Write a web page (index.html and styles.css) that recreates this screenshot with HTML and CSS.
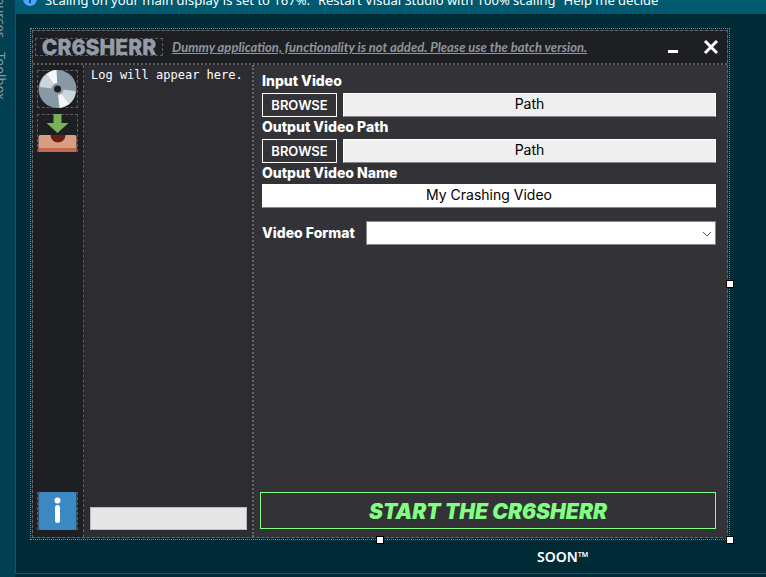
FILE: index.html
```html
<!DOCTYPE html>
<html lang="en">
<head>
<meta charset="utf-8">
<title>CR6SHERR designer</title>
<link rel="stylesheet" href="styles.css">
</head>
<body>
<nav class="rail">
  <span>Data Sources</span>
  <span>Toolbox</span>
</nav>
<main class="designer">
  <div class="notice">
    <svg class="notice-icon" viewBox="0 0 14 14"><circle cx="7" cy="7" r="7" fill="#4da3ff"/><path d="M6 6h2v5H6zM6 3h2v2H6z" fill="#005a70"/></svg>
    <span>Scaling on your main display is set to 167%.</span>
    <a href="#restart">Restart Visual Studio with 100% scaling</a>
    <a href="#help">Help me decide</a>
  </div>
  <section class="canvas">
    <div class="window">
      <div class="frame">
        <header class="titlebar">
          <h1 class="logo">CR6SHERR</h1>
          <p class="tagline">Dummy application, functionality is not added. Please use the batch version.</p>
          <button class="caption-button" type="button" aria-label="Minimize"><svg viewBox="0 0 16 16"><path d="M3 12.500h10" stroke="#fff" stroke-width="3"/></svg></button>
          <button class="caption-button" type="button" aria-label="Close"><svg viewBox="0 0 16 16"><path d="M2 2l12 12M14 2L2 14" stroke="#fff" stroke-width="3"/></svg></button>
        </header>
        <div class="content">
          <aside class="tools">
            <button class="tool" type="button" aria-label="Disc">
              <svg viewBox="0 0 38 38"><circle cx="19" cy="19" r="19" fill="#8899a6"/><path d="M19 19L1 17C2 11 4 7 8 4z" fill="#ccd6dd"/><path d="M19 19L8 4c3-2 6-4 10-4z" fill="#f5f8fa"/><path d="M19 19l18 2c0 6-3 10-6 13z" fill="#ccd6dd"/><path d="M19 19l12 15c-3 2-6 3-10 4z" fill="#f5f8fa"/><circle cx="19" cy="19" r="6" fill="#8899a6"/><circle cx="19" cy="19" r="3.500" fill="#1e1f23"/></svg>
            </button>
            <button class="tool" type="button" aria-label="Save to tray">
              <svg viewBox="0 0 38 38"><path d="M15 0h8v9h7L19 19 8 9h7z" fill="#77b255"/><rect y="21" width="38" height="17" rx="2" fill="#d99e82"/><path d="M0 34h38v2q0 2-2 2H2q-2 0-2-2z" fill="#c1694f"/><path d="M12 21h15a7.500 7.500 0 0 1-15 0z" fill="#662113"/></svg>
            </button>
            <button class="tool tool-info" type="button" aria-label="About">
              <svg viewBox="0 0 38 38"><rect width="38" height="38" rx="3" fill="#3b88c3"/><circle cx="19" cy="8.500" r="3" fill="#fff"/><rect x="16.500" y="13" width="5" height="18" rx="2.500" fill="#fff"/></svg>
            </button>
          </aside>
          <section class="log">
            <output class="log-text">Log will appear here.</output>
            <div class="progress" role="progressbar" aria-label="Progress"></div>
          </section>
          <form class="settings">
            <label for="input-path">Input Video</label>
            <div class="row">
              <button class="browse" type="button">BROWSE</button>
              <input class="field readonly" id="input-path" value="Path" readonly>
            </div>
            <label for="output-path">Output Video Path</label>
            <div class="row">
              <button class="browse" type="button">BROWSE</button>
              <input class="field readonly" id="output-path" value="Path" readonly>
            </div>
            <label for="output-name">Output Video Name</label>
            <input class="field" id="output-name" value="My Crashing Video">
            <div class="row format">
              <label for="format">Video Format</label>
              <div class="select">
                <select id="format"><option></option></select>
                <svg class="chevron" viewBox="0 0 10 6"><path d="M1 1l4 4 4-4" fill="none" stroke="#555"/></svg>
              </div>
            </div>
            <button class="start" type="submit">START THE CR6SHERR</button>
          </form>
        </div>
      </div>
      <i class="handle east"></i>
      <i class="handle south"></i>
      <i class="handle corner"></i>
    </div>
    <p class="soon">SOON™</p>
  </section>
</main>
</body>
</html>
```
FILE: styles.css
```css
* { box-sizing: border-box; }

body {
  margin: 0;
  height: 100vh;
  display: flex;
  overflow: hidden;
  background: #002b36;
  color: #fff;
  font-family: "Noto Sans", sans-serif;
}

h1, p { margin: 0; }

button, input, select {
  margin: 0;
  font: inherit;
  color: inherit;
}

svg { display: block; }

.rail {
  flex: 0 0 15px;
  display: flex;
  flex-direction: column;
  align-items: flex-start;
  background: #004052;
  color: #839aa0;
  font-size: 13px;
  line-height: 16px;
}

.rail span {
  margin: -42px 0 56px -7px;
  writing-mode: vertical-rl;
  white-space: nowrap;
}

.designer {
  flex: 1;
  min-width: 0;
  display: flex;
  flex-direction: column;
  padding-bottom: 3px;
}

.notice {
  flex: none;
  height: 14px;
  display: flex;
  align-items: flex-end;
  gap: 8px;
  padding-left: 8px;
  background: #005b70;
  font-size: 13px;
  line-height: 18px;
  white-space: nowrap;
}

.notice a {
  color: inherit;
  text-decoration: none;
}

.notice span, .notice a { margin-bottom: 5px; }

.notice-icon {
  flex: none;
  width: 14px;
  height: 14px;
  margin-bottom: 8px;
}

.canvas {
  flex: 1;
  min-height: 0;
  display: flex;
  flex-direction: column;
  padding: 14px 36px 0 14px;
  border-left: 1px solid #3f4446;
  border-bottom: 1px solid #3f4446;
}

.window {
  flex: 1;
  min-height: 0;
  position: relative;
  display: flex;
  padding: 1px;
  border: 1px dotted #6d8a8c;
}

.frame {
  flex: 1;
  min-width: 0;
  display: flex;
  flex-direction: column;
  border: 1px dashed #66666c;
  background: #323237;
}

.titlebar {
  flex: 0 0 34px;
  display: flex;
  align-items: center;
  padding: 0 8px 0 2px;
  background: #1e1f23;
  border-bottom: 2px dotted #5c5c62;
}

.logo {
  flex: none;
  width: 128px;
  height: 18px;
  border: 1px dashed #5c5c62;
  color: #949ba6;
  font: 900 21px/18px Inter, sans-serif;
  text-align: center;
}

.tagline {
  flex: 1;
  padding-left: 9px;
  color: #8f959e;
  font: italic 700 13px/16px Lato, sans-serif;
  text-decoration: underline;
  white-space: nowrap;
}

.caption-button {
  width: 16px;
  height: 16px;
  padding: 0;
  border: 0;
  background: none;
}

.caption-button + .caption-button { margin-left: 22px; }

.content {
  flex: 1;
  min-height: 0;
  display: flex;
}

.tools {
  flex: 0 0 51px;
  display: flex;
  flex-direction: column;
  gap: 6px;
  padding: 5px 5px 7px 4px;
  background: #1e1f23;
  border-right: 1px dashed #5c5c62;
}

.tool {
  flex: none;
  width: 41px;
  height: 38px;
  padding: 0;
  border: 1px dashed #5c5c62;
  background: none;
}

.tool svg {
  width: 39px;
  height: 38px;
  margin-top: -1px;
}

.tool-info { margin-top: auto; }

.log {
  flex: 0 0 170px;
  display: flex;
  flex-direction: column;
  justify-content: space-between;
  padding: 2px 5px 7px 6px;
  background: #2d2d31;
  border-right: 2px dotted #66666e;
}

.log-text {
  padding-left: 1px;
  font: 12px/16px "DejaVu Sans Mono", monospace;
}

.progress {
  height: 23px;
  border: 1px solid #bcbcbc;
  background: #e6e6e6;
}

.settings {
  flex: 1;
  min-width: 0;
  display: flex;
  flex-direction: column;
  padding: 6px 11px 8px 6px;
  font: 14px/20px Inter, sans-serif;
}

.settings label {
  flex: none;
  padding-left: 2px;
  font-weight: 800;
}

.row {
  display: flex;
  gap: 6px;
  margin-top: 2px;
  padding-left: 2px;
}

.row .field { flex: 1; }

.browse {
  width: 75px;
  height: 24px;
  padding: 0;
  border: 1px solid #fff;
  background: none;
  font-size: 13px;
  font-weight: 600;
}

.field {
  min-width: 0;
  height: 24px;
  padding: 0 0 3px;
  border: 1px solid #fff;
  border-bottom-color: #858585;
  border-radius: 1px;
  background: #fff;
  color: #000;
  text-align: center;
}

.readonly { background: #efefef; }

.settings > .field { margin: 1px 0 0 2px; }

.format {
  align-items: center;
  gap: 11px;
  margin-top: 13px;
  padding-left: 0;
}

.select {
  flex: 1;
  position: relative;
}

.select select {
  display: block;
  width: 100%;
  height: 24px;
  appearance: none;
  border: 1px solid #858585;
  border-radius: 0;
  background: #fff;
  color: #000;
}

.chevron {
  position: absolute;
  right: 4px;
  top: 10px;
  width: 10px;
  height: 6px;
  pointer-events: none;
}

.start {
  height: 37px;
  margin-top: auto;
  padding: 2px 0 0;
  border: 1px solid #80ff80;
  background: none;
  color: #80ff80;
  font: italic 900 21px/24px Inter, sans-serif;
}

.handle {
  position: absolute;
  width: 8px;
  height: 8px;
  background: #fff;
  border: 1px solid #000;
}

.east { right: -5px; top: calc(50% - 4px); }
.south { left: calc(50% - 4px); bottom: -5px; }
.corner { right: -5px; bottom: -5px; }

.soon {
  flex: 0 0 33px;
  padding: 0 0 0 507px;
  font: 600 14px/33px "Noto Sans", sans-serif;
}
```
